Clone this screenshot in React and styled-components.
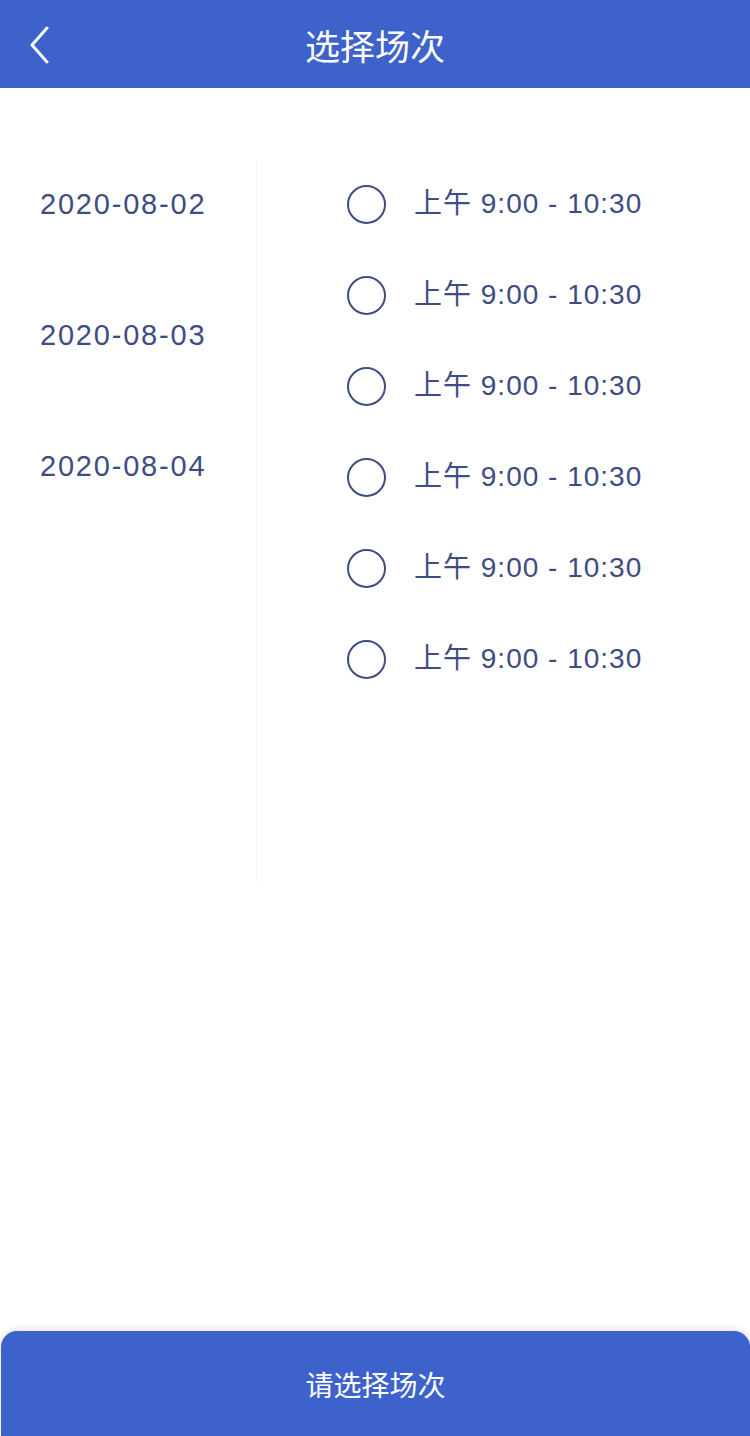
import React, { useState } from 'react';
import styled, { createGlobalStyle } from 'styled-components';

const BRAND_BLUE = '#3e62cc';
const TEXT_NAVY = '#3f4c82';
const FONT = '"Liberation Sans", "Noto Sans CJK SC", sans-serif';

const dates = ['2020-08-02', '2020-08-03', '2020-08-04'];
const slots = [1, 2, 3, 4, 5, 6].map((id) => ({ id, label: '上午 9:00 - 10:30' }));

const GlobalStyle = createGlobalStyle`
  html, body {
    margin: 0;
    padding: 0;
    background: #fff;
    font-family: ${FONT};
  }
`;

const Page = styled.div`
  display: flex;
  flex-direction: column;
  min-height: 1436px;
  background: #fff;
`;

const Header = styled.header`
  position: relative;
  height: 88px;
  background: ${BRAND_BLUE};
  display: flex;
  align-items: center;
  justify-content: center;
`;

const BackButton = styled.button`
  position: absolute;
  left: 22px;
  top: 24px;
  width: 34px;
  height: 42px;
  padding: 0;
  border: none;
  background: none;
  display: flex;
  align-items: center;
  justify-content: center;
  cursor: pointer;
`;

const Title = styled.h1`
  margin: 0;
  color: #fff;
  font-size: 35px;
  font-weight: 400;
`;

const Body = styled.main`
  flex: 1;
  display: flex;
  padding-top: 72px;
  align-items: flex-start;
`;

const DateColumn = styled.div`
  width: 257px;
  height: 722px;
  box-sizing: border-box;
  padding: 24px 0 0 40px;
  border-right: 1px solid #f3f3f6;
  display: flex;
  flex-direction: column;
  gap: 91px;
`;

const DateItem = styled.div`
  height: 40px;
  line-height: 40px;
  font-size: 29px;
  letter-spacing: 1.8px;
  color: ${TEXT_NAVY};
  cursor: pointer;
  white-space: nowrap;
`;

const SlotColumn = styled.div`
  flex: 1;
  padding: 24px 0 0 90px;
  display: flex;
  flex-direction: column;
  gap: 51px;
`;

const SlotRow = styled.label`
  display: flex;
  align-items: center;
  height: 40px;
  gap: 28px;
  cursor: pointer;
`;

const Radio = styled.span`
  width: 39px;
  height: 39px;
  box-sizing: border-box;
  border-radius: 50%;
  border: 2px solid ${TEXT_NAVY};
  display: flex;
  align-items: center;
  justify-content: center;

  &::after {
    content: '';
    width: 21px;
    height: 21px;
    border-radius: 50%;
    background: ${(p) => (p.checked ? TEXT_NAVY : 'transparent')};
  }
`;

const SlotText = styled.span`
  font-size: 28px;
  line-height: 40px;
  letter-spacing: 1px;
  color: ${TEXT_NAVY};
  white-space: nowrap;
`;

const Footer = styled.footer`
  padding-left: 1px;
`;

const SubmitButton = styled.button`
  width: 100%;
  height: 105px;
  border: none;
  border-radius: 16px 16px 0 0;
  background: ${BRAND_BLUE};
  box-shadow: 0 -2px 6px rgba(0, 0, 0, 0.12);
  color: #fff;
  font-family: ${FONT};
  font-size: 28px;
  cursor: pointer;
`;

function ChevronLeft() {
  return (
    <svg width="24" height="38" viewBox="0 0 24 38" fill="none">
      <path d="M20 2 L5 19 L20 36" stroke="#fff" strokeWidth="3" strokeLinecap="round" strokeLinejoin="round" />
    </svg>
  );
}

export default function App() {
  const [selected, setSelected] = useState(null);

  return (
    <Page>
      <GlobalStyle />
      <Header>
        <BackButton aria-label="返回">
          <ChevronLeft />
        </BackButton>
        <Title>选择场次</Title>
      </Header>

      <Body>
        <DateColumn>
          {dates.map((d) => (
            <DateItem key={d}>{d}</DateItem>
          ))}
        </DateColumn>

        <SlotColumn>
          {slots.map((s) => (
            <SlotRow key={s.id} onClick={() => setSelected(s.id)}>
              <Radio checked={selected === s.id} />
              <SlotText>{s.label}</SlotText>
            </SlotRow>
          ))}
        </SlotColumn>
      </Body>

      <Footer>
        <SubmitButton>请选择场次</SubmitButton>
      </Footer>
    </Page>
  );
}
